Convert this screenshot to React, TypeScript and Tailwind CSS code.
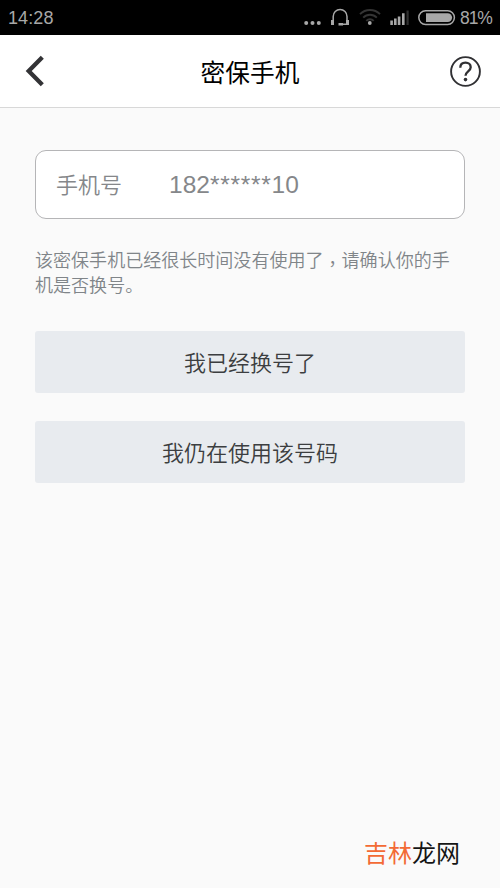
const actions = ["我已经换号了", "我仍在使用该号码"];

const StatusIcons = () => (
  <svg width="156" height="35" viewBox="300 0 156 35" fill="none">
    <g fill="#a8a8a8">
      <circle cx="306.2" cy="22.9" r="2" />
      <circle cx="312.5" cy="22.9" r="2" />
      <circle cx="318.8" cy="22.9" r="2" />
    </g>
    {/* Headset */}
    <path
      d="M333.2 22V16.4a6.9 6.9 0 0 1 13.8 0v7.8h-6"
      stroke="#a8a8a8"
      strokeWidth="1.5"
    />
    <path d="M331 20h3v5h-3zM346 20h3v5h-3zM338.5 23h4.5v2.4h-4.5z" fill="#a8a8a8" />
    {/* Wifi */}
    <g stroke="#343434" strokeWidth="1.9">
      <path d="M360 14.2a14 14 0 0 1 20 0" />
      <path d="M363.2 17.6a9.6 9.6 0 0 1 13.6 0" />
      <path d="M366.3 20.8a5.2 5.2 0 0 1 7.4 0" />
    </g>
    <circle cx="369.8" cy="23" r="1.9" fill="#a8a8a8" />
    {/* Signal */}
    <path
      d="M390.3 20.4h2.6V25h-2.6zM394 18.6h2.6V25H394zM397.8 16.4h2.6V25h-2.6zM402 13.2h2.6V25H402z"
      fill="#a8a8a8"
    />
    <path d="M406.5 10.5h2.2V25h-2.2z" fill="#303030" />
    {/* Battery */}
    <rect x="418.8" y="10.8" width="35.6" height="13.6" rx="6.8" stroke="#a8a8a8" strokeWidth="1.5" />
    <path d="M426 13.2h21.7a4.4 4.4 0 0 1 0 8.8H426z" fill="#a8a8a8" />
  </svg>
);

const StatusBar = () => (
  <div className="flex h-[35px] items-center bg-black pl-2 font-['Liberation_Sans',sans-serif] text-[18px] text-[#a8a8a8]">
    <span className="pt-px tracking-[0.1px]">14:28</span>
    <div className="ml-auto flex w-[200px] items-center">
      <StatusIcons />
      <span className="ml-1 pt-px text-[17.5px] tracking-[-1.1px]">81%</span>
    </div>
  </div>
);

const Header = () => (
  <header className="flex h-[73px] items-center border-b border-[#d8d8d8] bg-white pr-[18px] pl-6">
    <button aria-label="返回" className="w-[39px]">
      <svg width="22" height="34" viewBox="0 0 22 34" fill="none">
        <path d="M18.3 3.2 4.7 17l13.6 13.8" stroke="#333336" strokeWidth="4.3" />
      </svg>
    </button>
    <h1 className="flex-1 text-center text-[24.7px] leading-9 text-black">密保手机</h1>
    <button aria-label="帮助" className="ml-3">
      <svg width="33" height="33" viewBox="0 0 33 33" fill="none" stroke="#303033">
        <circle cx="16.5" cy="16.5" r="14.4" strokeWidth="1.9" />
        <path
          d="M11.3 12.8c0-3.4 2.1-5.2 5.2-5.2s5.2 1.9 5.2 4.6c0 4.2-5.2 4.2-5.2 8.6"
          strokeWidth="2.3"
        />
        <circle cx="16.5" cy="24.6" r="1.8" fill="#303033" stroke="none" />
      </svg>
    </button>
  </header>
);

export default function App() {
  return (
    <div className="flex h-[888px] w-[500px] flex-col bg-[#fafafa] font-['Noto_Sans_CJK_SC',sans-serif]">
      <StatusBar />
      <Header />

      <main className="flex flex-1 flex-col px-[35px] pt-[42px]">
        <div className="flex h-[69px] items-center rounded-[11px] border border-[#b5b5b7] bg-white pl-5 text-[22px] text-[#85878a]">
          <span className="w-[113px] pb-0.5 font-[350]">手机号</span>
          <span className="pt-0.5 font-['Liberation_Sans',sans-serif] text-[24.5px]">
            182<span className="tracking-[0.75px]">******</span>10
          </span>
        </div>

        <p className="mt-7 h-[50px] text-[18.05px] leading-[24.5px] font-[350] whitespace-nowrap text-[#808589]">
          该密保手机已经很长时间没有使用了
          <span
            className="relative top-1 font-['Noto_Sans_CJK_TC',sans-serif]"
            lang="zh-TW"
          >
            ，
          </span>
          请确认你的手
          <br />
          机是否换号。
        </p>

        <div className="mt-[34px] flex flex-col gap-7">
          {actions.map((label) => (
            <button
              key={label}
              className="h-[62px] rounded-[3px] bg-[#e8ebef] pb-0.5 text-[22px] font-[350] text-[#3c3e40]"
            >
              {label}
            </button>
          ))}
        </div>
      </main>

      <footer className="flex justify-end pr-10 pb-[18px] text-[24px] leading-9">
        <span className="text-[#f36a35]">吉林</span>
        <span className="text-[#151515]">龙网</span>
      </footer>
    </div>
  );
}
